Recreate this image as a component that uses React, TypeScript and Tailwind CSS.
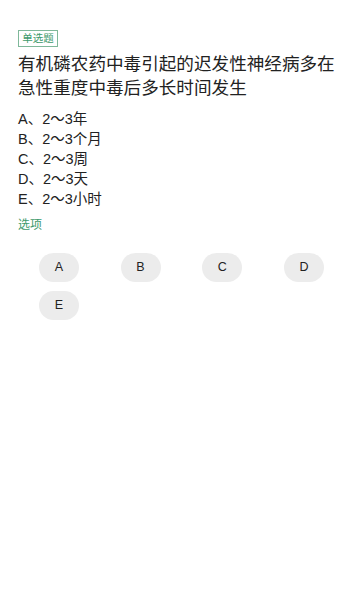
import React from "react";

const options = ["A、2～3年", "B、2～3个月", "C、2～3周", "D、2～3天", "E、2～3小时"];
const letters = ["A", "B", "C", "D", "E"];

export default function App() {
  return (
    <div
      className="w-[342px] h-[600px] bg-white overflow-hidden"
      style={{ fontFamily: '"Liberation Sans", "Noto Sans CJK SC", sans-serif' }}
    >
      <div className="pl-[18px] pr-[4px] pt-[30px]">
        <div className="flex w-[40px] items-center justify-center h-[17px] border border-[#7fb89a] text-[10.5px] leading-none text-[#3e9a6c]">
          单选题
        </div>
        <div className="mt-[5px] text-[17.6px] leading-[24px] text-[#222]">
          有机磷农药中毒引起的迟发性神经病多在急性重度中毒后多长时间发生
        </div>
        <div className="mt-[9px] flex flex-col">
          {options.map((o) => (
            <div key={o} className="text-[14.5px] leading-[20px] text-[#222]">
              {o}
            </div>
          ))}
        </div>
        <div className="mt-[8px] text-[12px] leading-[17px] text-[#3e9a6c]">选项</div>
      </div>
      <div className="pl-[18px] mt-[19px] grid grid-cols-[repeat(4,81.7px)] gap-y-[9px]">
        {letters.map((l) => (
          <div key={l} className="flex justify-center">
            <div className="w-[40px] h-[29px] rounded-full bg-[#ececec] flex items-center justify-center text-[12.5px] text-[#222]">
              {l}
            </div>
          </div>
        ))}
      </div>
    </div>
  );
}
